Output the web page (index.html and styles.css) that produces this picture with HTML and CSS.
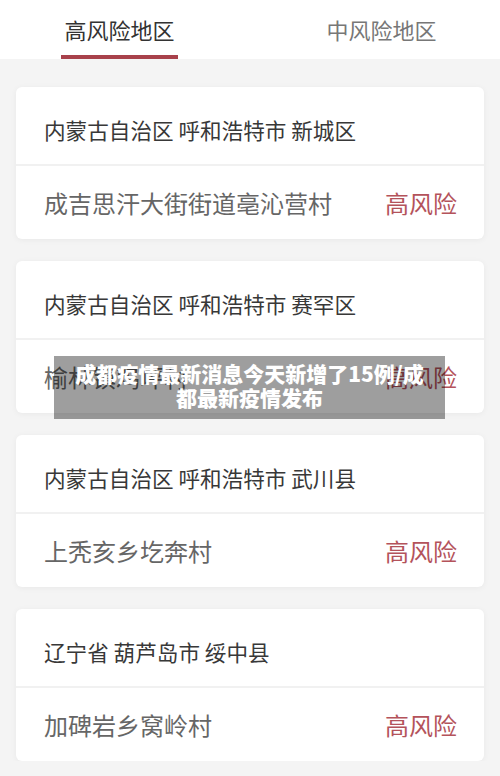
FILE: index.html
```html
<!DOCTYPE html>
<html lang="zh-CN">
<head>
    <meta charset="UTF-8">
    <meta name="viewport" content="width=device-width, initial-scale=1.0">
    <title>风险地区</title>
    <link rel="stylesheet" href="styles.css">
</head>
<body>
    <div class="tabs">
        <div class="tab active">高风险地区</div>
        <div class="tab">中风险地区</div>
    </div>

    <div class="list">
        <div class="card">
            <div class="region">内蒙古自治区 呼和浩特市 新城区</div>
            <div class="place">
                <span>成吉思汗大街街道亳沁营村</span>
                <span class="level">高风险</span>
            </div>
        </div>
        <div class="card">
            <div class="region">内蒙古自治区 呼和浩特市 赛罕区</div>
            <div class="place">
                <span>榆林镇鸡坪村</span>
                <span class="level">高风险</span>
            </div>
        </div>
        <div class="card">
            <div class="region">内蒙古自治区 呼和浩特市 武川县</div>
            <div class="place">
                <span>上秃亥乡圪奔村</span>
                <span class="level">高风险</span>
            </div>
        </div>
        <div class="card">
            <div class="region">辽宁省 葫芦岛市 绥中县</div>
            <div class="place">
                <span>加碑岩乡窝岭村</span>
                <span class="level">高风险</span>
            </div>
        </div>
    </div>

    <!-- caption laid over the screenshot -->
    <div class="caption">成都疫情最新消息今天新增了15例/成都最新疫情发布</div>
</body>
</html>
```

FILE: styles.css
```css
body {
    margin: 0;
    position: relative;
    background-color: #f4f4f4;
    font-family: "Noto Sans CJK SC", "Noto Sans", sans-serif;
    color: #333;
}
.tabs {
    display: flex;
    justify-content: space-between;
    height: 59px;
    padding: 0 60px 0 61px;
    background-color: #fff;
}
.tab {
    width: 117px;
    box-sizing: border-box;
    padding-top: 13px;
    text-align: center;
    font-size: 22px;
    line-height: 32px;
    color: #777;
}
.tab.active {
    color: #333;
    border-bottom: 4px solid #a8414b;
}
.list {
    display: flex;
    flex-direction: column;
    gap: 22px;
    padding: 28px 16px 0;
}
.card {
    background-color: #fff;
    border-radius: 6px;
    box-shadow: 0 1px 6px rgba(0, 0, 0, 0.05);
}
.region {
    height: 79px;
    box-sizing: border-box;
    padding: 28px 28px 0;
    font-size: 21.6px;
    line-height: 30px;
    color: #383838;
    border-bottom: 2px solid #f1f1f1;
}
.place {
    display: flex;
    justify-content: space-between;
    align-items: center;
    height: 73px;
    padding: 0 27px 0 28px;
    font-size: 24px;
    color: #666;
}
.level {
    color: #b4535b;
}
.caption {
    position: absolute;
    left: 54px;
    top: 356px;
    width: 391px;
    height: 63px;
    box-sizing: border-box;
    padding: 5px 20px 0;
    background-color: rgba(0, 0, 0, 0.38);
    color: #fff;
    font-size: 21px;
    font-weight: 900;
    line-height: 24px;
    text-align: center;
}
```
